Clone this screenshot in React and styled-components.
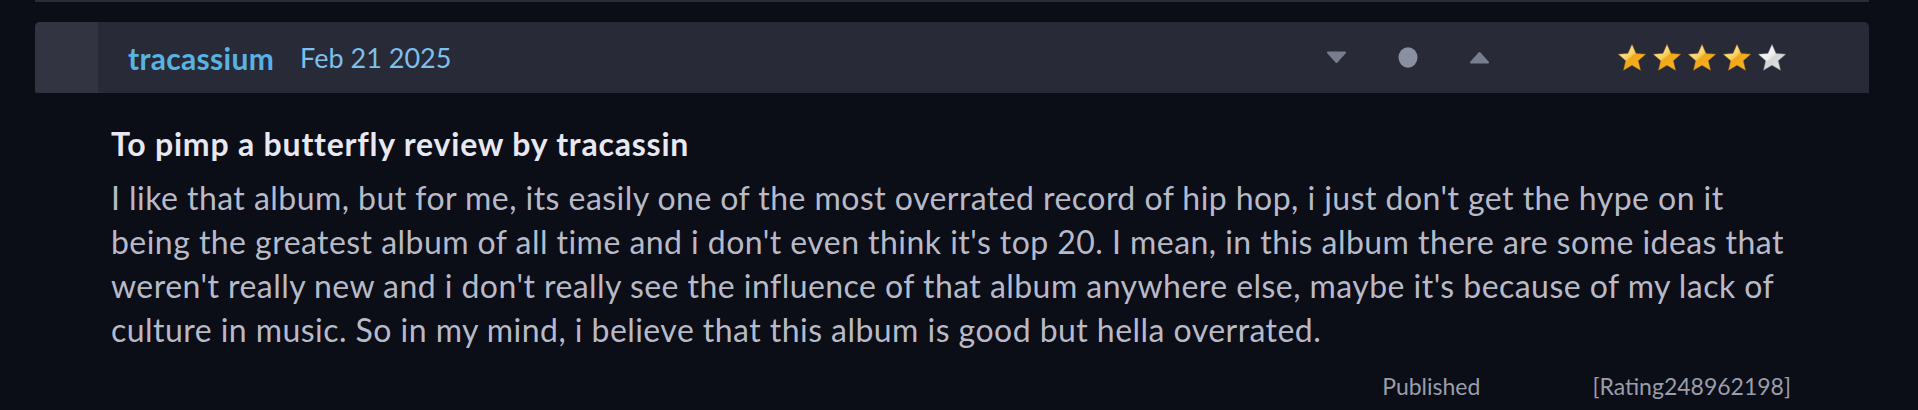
import React from "react";
import styled, { createGlobalStyle } from "styled-components";

const GlobalStyle = createGlobalStyle`
  html, body {
    margin: 0;
    padding: 0;
    background: #0b0d17;
  }
  body {
    font-family: "Lato", "Open Sans", sans-serif;
  }
`;

const Page = styled.div`
  width: 1918px;
  height: 410px;
  overflow: hidden;
  background: #0b0d17;
  padding: 0 49px 0 35px;
  box-sizing: border-box;
`;

const TopRule = styled.div`
  height: 2px;
  background: #2a2c39;
  margin-bottom: 20px;
`;

const Header = styled.div`
  display: flex;
  align-items: center;
  height: 71px;
  background: #282a37;
  border-radius: 5px 5px 0 0;
`;

const Avatar = styled.div`
  width: 63px;
  height: 100%;
  background: #323541;
  border-radius: 5px 0 0 5px;
  flex-shrink: 0;
`;

const Username = styled.span`
  margin-left: 30px;
  font-size: 30px;
  font-weight: 700;
  letter-spacing: 0.3px;
  color: #59b3e2;
`;

const DateText = styled.span`
  margin-left: 26px;
  font-size: 27px;
  color: #7cc0ef;
`;

const Votes = styled.div`
  margin-left: auto;
  display: flex;
  align-items: center;
  gap: 51px;
`;

const Stars = styled.div`
  display: flex;
  gap: 5px;
  margin-left: 127px;
  margin-right: 82px;
`;

const Body = styled.div`
  padding: 0 76px;
`;

const Title = styled.h3`
  margin: 32px 0 0;
  font-size: 32px;
  line-height: 38px;
  letter-spacing: 0.8px;
  font-weight: 700;
  color: #e7e8f2;
`;

const Text = styled.p`
  margin: 13px 0 0;
  font-size: 32px;
  line-height: 44px;
  letter-spacing: 0.45px;
  white-space: nowrap;
  color: #b8bac8;
`;

const Footer = styled.div`
  display: flex;
  justify-content: flex-end;
  gap: 112px;
  margin-top: 20px;
  padding-right: 2px;
  font-size: 23px;
  color: #9a9daa;
`;

const Star = ({ filled, id }) => (
  <svg width="30" height="30" viewBox="0 0 24 24">
    <defs>
      <linearGradient id={id} x1="0.15" y1="0.1" x2="0.85" y2="0.9">
        {filled ? (
          <>
            <stop offset="0" stopColor="#fff0b4" />
            <stop offset="0.42" stopColor="#f7cd5a" />
            <stop offset="0.5" stopColor="#f1a619" />
            <stop offset="1" stopColor="#f6b526" />
          </>
        ) : (
          <>
            <stop offset="0" stopColor="#ffffff" />
            <stop offset="0.45" stopColor="#ececec" />
            <stop offset="0.55" stopColor="#d4d4d6" />
            <stop offset="1" stopColor="#e2e2e4" />
          </>
        )}
      </linearGradient>
    </defs>
    <path
      d="M12 1.2l3.2 7.1 7.7.7-5.9 5.1 1.8 7.7L12 17.7l-6.8 4.1 1.8-7.7-5.9-5.1 7.7-.7z"
      fill={`url(#${id})`}
      stroke={filled ? "#b77a12" : "#8d8d95"}
      strokeOpacity="0.45"
      strokeWidth="0.8"
      strokeLinejoin="round"
    />
  </svg>
);

const Arrow = ({ up }) => (
  <svg width="21" height="13" viewBox="0 0 21 13">
    <path
      d={up ? "M2 11.5h17L10.5 2z" : "M2 1.5h17L10.5 11z"}
      fill="#787d8f"
      stroke="#787d8f"
      strokeLinejoin="round"
      strokeWidth="2"
    />
  </svg>
);

export default function App() {
  return (
    <Page>
      <GlobalStyle />
      <TopRule />
      <Header>
        <Avatar />
        <Username>tracassium</Username>
        <DateText>Feb 21 2025</DateText>
        <Votes>
          <Arrow />
          <svg width="20" height="21" viewBox="0 0 20 21">
            <ellipse cx="10" cy="10.5" rx="9.5" ry="10.2" fill="#8a8fa1" />
          </svg>
          <Arrow up />
        </Votes>
        <Stars>
          {[0, 1, 2, 3, 4].map((i) => (
            <Star key={i} id={`st${i}`} filled={i < 4} />
          ))}
        </Stars>
      </Header>
      <Body>
        <Title>To pimp a butterfly review by tracassin</Title>
        <Text>
          I like that album, but for me, its easily one of the most overrated record of hip hop, i just don't get the hype on it
          <br />
          being the greatest album of all time and i don't even think it's top 20. I mean, in this album there are some ideas that
          <br />
          weren't really new and i don't really see the influence of that album anywhere else, maybe it's because of my lack of
          <br />
          culture in music. So in my mind, i believe that this album is good but hella overrated.
        </Text>
        <Footer>
          <span>Published</span>
          <span>[Rating248962198]</span>
        </Footer>
      </Body>
    </Page>
  );
}
